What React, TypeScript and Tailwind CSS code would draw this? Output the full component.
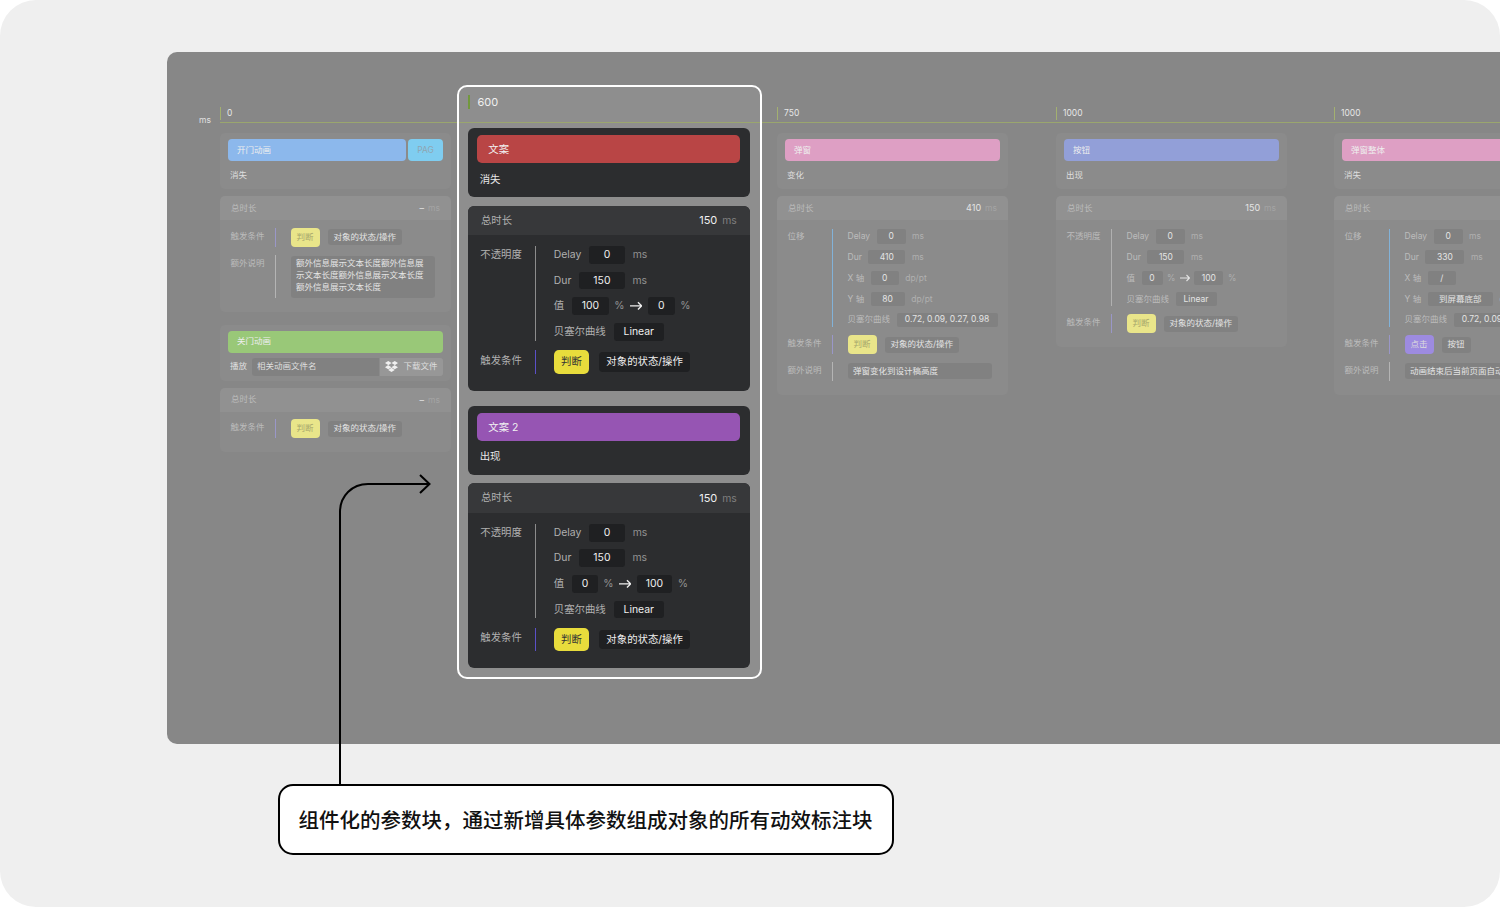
import type { ReactNode } from "react";
import { FaDropbox } from "react-icons/fa";

const font = { fontFamily: '"Inter","Noto Sans CJK SC",sans-serif' };

const dim =
  "[--card:#8b8b8b] [--head:#919191] [--box:#818181] [--lab:#bcbcbc] [--val:#e4e4e4] [--unit:#b0b0b0] [--tag:#e9e58a] [--tagt:#a8a76c] [--sub:#dedede] [--bart:#eeeeee] [--none:#a4a4a4] [--trig:#9a97c8] [--oline:#b0b0b0]";
const bright =
  "[--card:#2c2d2f] [--head:#37383a] [--box:#1f2022] [--lab:#b0b0b0] [--val:#efefef] [--unit:#939393] [--tag:#e8dc3c] [--tagt:#333333] [--sub:#e8e8e8] [--bart:#f2f2f2] [--none:#7f7f7f] [--trig:#5b50c8] [--oline:#8c8c8c]";

function Title({ color, name, sub }: { color: string; name: string; sub: string }) {
  return (
    <div className="w-[231px] h-[56.5px] rounded-[5px] bg-[var(--card)] px-[8px] pt-[6px]">
      <div className={`h-[22.5px] rounded-[4px] pl-[9px] pt-[1px] flex items-center text-[8.5px] text-[var(--bart)] ${color}`}>{name}</div>
      <div className="mt-[8px] pl-[2px] text-[8.5px] leading-[12px] text-[var(--sub)]">{sub}</div>
    </div>
  );
}

function Head({ value }: { value: string }) {
  return (
    <div className="h-[24px] rounded-t-[5px] bg-[var(--head)] px-[11px] flex items-center justify-between text-[8.5px] text-[var(--lab)]">
      <span>总时长</span>
      <span>
        <span className="text-[9px] text-[var(--val)]">{value}</span>
        <span className="ml-[4px] text-[var(--none)]">ms</span>
      </span>
    </div>
  );
}

function Section({ label, line, top = "", children }: { label: string; line: string; top?: string; children: ReactNode }) {
  return (
    <div className="flex pl-[10.5px]">
      <div className={`w-[44.5px] shrink-0 text-[8.5px] leading-[14.5px] text-[var(--lab)] ${top}`}>{label}</div>
      <div className={`w-[1px] shrink-0 ${line}`} />
      <div className="ml-[14.5px] flex flex-col gap-[6.4px] min-w-0">{children}</div>
    </div>
  );
}

function Box({ w, children }: { w: string; children: ReactNode }) {
  return (
    <span className={`h-[14.5px] rounded-[2px] bg-[var(--box)] flex items-center justify-center text-[8.5px] text-[var(--val)] whitespace-nowrap shrink-0 ${w}`}>
      {children}
    </span>
  );
}

function Row({ label, box, w, unit }: { label: string; box: string; w: string; unit?: string }) {
  return (
    <div className="h-[14.5px] flex items-center gap-[6.5px] text-[8.5px] whitespace-nowrap">
      <span className="text-[var(--lab)]">{label}</span>
      <Box w={w}>{box}</Box>
      {unit && <span className="text-[var(--unit)]">{unit}</span>}
    </div>
  );
}

function Arrow() {
  return (
    <svg width="10" height="8" viewBox="0 0 10 8" fill="none" stroke="var(--val)" strokeWidth="1.1" className="shrink-0">
      <path d="M0 4H9.5M6.5 1l3 3-3 3" />
    </svg>
  );
}

function ValueRow({ a, aw, b, bw }: { a: string; aw: string; b: string; bw: string }) {
  return (
    <div className="h-[14.5px] flex items-center gap-[4.5px] text-[8.5px] whitespace-nowrap">
      <span className="text-[var(--lab)] mr-[2px]">值</span>
      <Box w={aw}>{a}</Box>
      <span className="text-[var(--unit)]">%</span>
      <Arrow />
      <Box w={bw}>{b}</Box>
      <span className="text-[var(--unit)]">%</span>
    </div>
  );
}

function Trigger({ tag = "判断", tagClass = "bg-[var(--tag)] text-[var(--tagt)]", what = "对象的状态/操作" }: { tag?: string; tagClass?: string; what?: string }) {
  return (
    <Section label="触发条件" top="pt-[1px]" line="bg-[var(--trig)] h-[19px]">
      <div className="h-[19px] flex items-center gap-[8px] text-[8.5px] whitespace-nowrap">
        <span className={`w-[29px] h-[19px] rounded-[4px] flex items-center justify-center ${tagClass}`}>{tag}</span>
        <span className="h-[16px] px-[6px] rounded-[3px] bg-[var(--box)] flex items-center text-[var(--val)]">{what}</span>
      </div>
    </Section>
  );
}

function Note({ text, w, h, line }: { text: string; w: string; h: string; line: string }) {
  return (
    <Section label="额外说明" top="pt-[1px]" line={line}>
      <div className={`mt-[1px] px-[5.5px] py-[1.5px] rounded-[3px] bg-[var(--box)] text-[8.5px] leading-[12.2px] text-[var(--val)] ${w} ${h}`}>{text}</div>
    </Section>
  );
}

function Params({ value, tight, children }: { value: string; tight?: boolean; children: ReactNode }) {
  return (
    <div className="w-[231px] mt-[7px] rounded-[5px] bg-[var(--card)] pb-[14px]">
      <Head value={value} />
      <div className={`flex flex-col gap-[8px] ${tight ? "pt-[7.5px]" : "pt-[9px]"}`}>{children}</div>
    </div>
  );
}

function Opacity({ from }: { from: "100" | "0" }) {
  return (
    <Params value="150">
      <Section label="不透明度" line="bg-[var(--oline)]">
        <Row label="Delay" box="0" w="w-[29px]" unit="ms" />
        <Row label="Dur" box="150" w="w-[37px]" unit="ms" />
        {from === "100" ? (
          <ValueRow a="100" aw="w-[30px]" b="0" bw="w-[22px]" />
        ) : (
          <ValueRow a="0" aw="w-[21px]" b="100" bw="w-[29px]" />
        )}
        <Row label="贝塞尔曲线" box="Linear" w="w-[41px]" />
      </Section>
      <Trigger />
    </Params>
  );
}

function Tick({ label }: { label: string }) {
  return (
    <div className="flex items-center h-[18px] gap-[6px]">
      <span className="w-[1px] h-[13px] bg-[#a3b070]" />
      <span className="text-[8.5px] text-[#e6e6e6]">{label}</span>
    </div>
  );
}

function Column({ label, pad, width, children }: { label: string; pad: string; width: string; children: ReactNode }) {
  return (
    <div className={`mt-[52px] shrink-0 ${width}`}>
      <div className={`border-b border-[#9aa66e] ${pad}`}>
        <Tick label={label} />
      </div>
      <div className={`mt-[9.5px] ${pad}`}>{children}</div>
    </div>
  );
}

export default function App() {
  return (
    <div className="w-[1500px] h-[907px] bg-white overflow-hidden" style={font}>
      <div className="relative w-[1500px] h-[907px] bg-[#efefef] rounded-[36px] overflow-hidden pt-[52px]">
        <div className="ml-[167px] h-[692px] rounded-l-[10px] bg-[#878787] flex overflow-hidden">
          <div className="w-[53px] shrink-0 pl-[32px] pt-[62px] text-[8.5px] text-[#e0e0e0]">ms</div>

          <Column label="0" pad="" width={`w-[237px] ${dim}`}>
            <div className="w-[231px] h-[56.5px] rounded-[5px] bg-[var(--card)] px-[8px] pt-[6px]">
              <div className="flex gap-[2px]">
                <div className="h-[22.5px] w-[178px] rounded-[4px] pl-[9px] pt-[1px] flex items-center text-[8.5px] text-[var(--bart)] bg-[#8cb8ec]">开门动画</div>
                <div className="h-[22.5px] w-[35px] rounded-[4px] pt-[1px] flex items-center justify-center text-[8.5px] text-[#8fa6b2] bg-[#7fcdf0]">PAG</div>
              </div>
              <div className="mt-[8px] pl-[2px] text-[8.5px] leading-[12px] text-[var(--sub)]">消失</div>
            </div>
            <Params value="–" tight>
              <Trigger />
              <Note
                text="额外信息展示文本长度额外信息展示文本长度额外信息展示文本长度额外信息展示文本长度"
                w="w-[144px]"
                h="h-[42px]"
                line="bg-[#b4b4b4] h-[43px]"
              />
            </Params>
            <div className="mt-[13.5px] w-[231px] h-[55.5px] rounded-[5px] bg-[var(--card)] px-[8px] pt-[5.5px]">
              <div className="h-[22px] rounded-[4px] pl-[9px] flex items-center text-[8.5px] text-[var(--bart)] bg-[#99c878]">关门动画</div>
              <div className="mt-[5px] h-[18px] flex items-center text-[8.5px]">
                <span className="w-[24px] pl-[2px] text-[var(--sub)]">播放</span>
                <span className="w-[127px] h-[18px] rounded-l-[3px] bg-[var(--box)] pl-[5px] flex items-center text-[var(--sub)]">相关动画文件名</span>
                <span className="ml-[1px] w-[63px] h-[18px] rounded-r-[3px] bg-[#979797] flex items-center justify-center gap-[5px] text-[var(--sub)]">
                  <FaDropbox className="text-[13px] text-[#f0f0f0]" />
                  下载文件
                </span>
              </div>
            </div>
            <Params value="–" tight>
              <Trigger />
            </Params>
          </Column>

          <div className={`mt-[33px] shrink-0 w-[305px] h-[594px] rounded-[10px] border-[2.5px] border-white bg-[#8e8e8e] ${bright}`}>
            <div className="flex items-center h-[36px] pb-[5px] pl-[8.5px] border-b border-[#9aa66e]">
              <span className="w-[2px] h-[14px] bg-[#72983e]" />
              <span className="ml-[8px] text-[11px] text-[#f0f0f0]">600</span>
            </div>
            <div className="pl-[8.5px] pt-[5px]">
              <div className="[zoom:1.224]">
                <Title color="bg-[#b94545]" name="文案" sub="消失" />
                <Opacity from="100" />
                <div className="h-[12.3px]" />
                <Title color="bg-[#9655b3]" name="文案 2" sub="出现" />
                <Opacity from="0" />
              </div>
            </div>
          </div>

          <Column label="750" pad="pl-[15px]" width={`w-[279px] ${dim}`}>
            <Title color="bg-[#de9fc4]" name="弹窗" sub="变化" />
            <Params value="410">
              <Section label="位移" line="bg-[#82b2d8]">
                <Row label="Delay" box="0" w="w-[29px]" unit="ms" />
                <Row label="Dur" box="410" w="w-[37px]" unit="ms" />
                <Row label="X 轴" box="0" w="w-[28px]" unit="dp/pt" />
                <Row label="Y 轴" box="80" w="w-[34px]" unit="dp/pt" />
                <Row label="贝塞尔曲线" box="0.72, 0.09, 0.27, 0.98" w="w-[101px]" />
              </Section>
              <Trigger />
              <Note text="弹窗变化到设计稿高度" w="w-[144px]" h="h-[16px] !py-0 flex items-center" line="bg-[#b4b4b4] h-[19px]" />
            </Params>
          </Column>

          <Column label="1000" pad="pl-[15px]" width={`w-[279px] ${dim}`}>
            <Title color="bg-[#929fd8]" name="按钮" sub="出现" />
            <Opacity from="0" />
          </Column>

          <Column label="1000" pad="pl-[14px]" width={`w-[279px] ${dim}`}>
            <Title color="bg-[#de9fc4]" name="弹窗整体" sub="消失" />
            <Params value="330">
              <Section label="位移" line="bg-[#82b2d8]">
                <Row label="Delay" box="0" w="w-[29px]" unit="ms" />
                <Row label="Dur" box="330" w="w-[39px]" unit="ms" />
                <Row label="X 轴" box="/" w="w-[28px]" />
                <Row label="Y 轴" box="到屏幕底部" w="w-[65px]" unit="dp/pt" />
                <Row label="贝塞尔曲线" box="0.72, 0.09, 0.27, 0.98" w="w-[101px]" />
              </Section>
              <Trigger tag="点击" tagClass="bg-[#9d8be0] text-[#dddddd]" what="按钮" />
              <Note text="动画结束后当前页面自动返回" w="w-[144px]" h="h-[16px] !py-0 flex items-center whitespace-nowrap" line="bg-[#b4b4b4] h-[19px]" />
            </Params>
          </Column>
        </div>

        <div className="ml-[277.5px] mt-[40px] w-[616px] h-[71px] rounded-[15px] border-2 border-black bg-white pl-[19px] pt-[3px] flex items-center text-[20.5px] font-medium text-[#111111] whitespace-nowrap">
          组件化的参数块，通过新增具体参数组成对象的所有动效标注块
        </div>

        <svg className="absolute left-[330px] top-[465px]" width="110" height="325" viewBox="0 0 110 325" fill="none" stroke="#000000" strokeWidth="2">
          <path d="M10 320V47C10 31 22 19 38 19H99" />
          <path d="M90 10L99.5 19L90 28" />
        </svg>
      </div>
    </div>
  );
}
